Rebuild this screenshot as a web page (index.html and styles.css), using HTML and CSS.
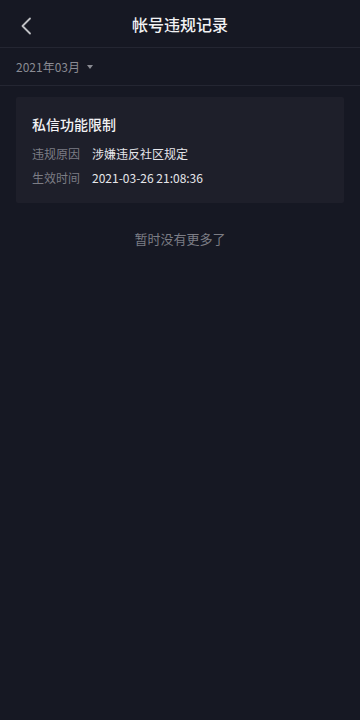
FILE: index.html
```html
<!DOCTYPE html>
<html lang="zh-CN">
<head>
  <meta charset="UTF-8" />
  <meta name="viewport" content="width=device-width, initial-scale=1">
  <title>帐号违规记录</title>
  <link rel="stylesheet" href="styles.css">
</head>
<body>

  <!-- HEADER -->
  <div class="header">
    <a href="#" class="back">
      <svg width="12" height="18" viewBox="0 0 12 18"><path d="M10 1.5 L2.5 9 L10 16.5" fill="none" stroke="#bfc0c4" stroke-width="1.8" stroke-linecap="round" stroke-linejoin="round"/></svg>
    </a>
    <h1>帐号违规记录</h1>
  </div>

  <!-- MONTH FILTER -->
  <div class="month">
    <span>2021年03月</span>
    <span class="arrow"></span>
  </div>

  <!-- RECORD LIST -->
  <div class="list">
    <div class="card">
      <div class="card-title">私信功能限制</div>
      <div class="row"><span class="label">违规原因</span><span class="value">涉嫌违反社区规定</span></div>
      <div class="row"><span class="label">生效时间</span><span class="value">2021-03-26 21:08:36</span></div>
    </div>
  </div>

  <p class="no-more">暂时没有更多了</p>

</body>
</html>
```

FILE: styles.css
```css
body {
  font-family: 'Noto Sans CJK SC', 'Noto Sans', sans-serif;
  background: #161823;
  margin: 0;
  height: 720px;
  color: #fff;
}

.header {
  height: 47px;
  display: flex;
  align-items: center;
  justify-content: center;
  position: relative;
  border-bottom: 1px solid #242632;
}

.back {
  position: absolute;
  left: 20px;
  top: 17px;
  display: flex;
}

h1 {
  margin: 0;
  font-size: 16px;
  font-weight: 500;
  color: #f2f2f4;
}

.month {
  height: 37px;
  padding-left: 16px;
  display: flex;
  align-items: center;
  gap: 6px;
  font-size: 12px;
  color: #8a8b93;
  border-bottom: 1px solid #242632;
}

.arrow {
  width: 0;
  height: 0;
  border-left: 3.5px solid transparent;
  border-right: 3.5px solid transparent;
  border-top: 4px solid #8a8b93;
  margin-left: 1px;
}

.list {
  padding: 11px 16px 0;
}

.card {
  background: #1e1f2a;
  border-radius: 2px;
  padding: 16px 16px 13px;
}

.card-title {
  font-size: 14px;
  font-weight: 500;
  color: #f2f2f4;
  line-height: 22px;
  margin-bottom: 7px;
}

.row {
  display: flex;
  gap: 12px;
  font-size: 12px;
  line-height: 24px;
}

.label {
  color: #7c7d85;
}

.value {
  color: #e6e6ea;
}

.no-more {
  text-align: center;
  font-size: 13px;
  color: #7c7d85;
  margin: 26px 0 0;
}
```
